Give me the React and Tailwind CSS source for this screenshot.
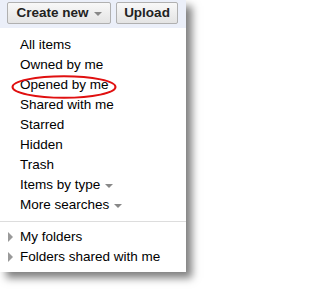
import React from 'react';

const Caret = () => (
    <span className="inline-block ml-[5px] mt-[2px] align-middle w-0 h-0 border-l-[4px] border-r-[4px] border-t-[4px] border-l-transparent border-r-transparent border-t-[#888]" />
);

const Arrow = () => (
    <span className="inline-block ml-[8px] mr-[7px] w-0 h-0 border-t-[5px] border-b-[5px] border-l-[5px] border-t-transparent border-b-transparent border-l-[#9a9a9a]" />
);

const items = ['All items', 'Owned by me', 'Opened by me', 'Shared with me', 'Starred', 'Hidden', 'Trash'];

export default function App() {
    return (
        <div className="w-[202px] h-[289px] bg-white" style={{ fontFamily: '"Liberation Sans", Arial, sans-serif' }}>
            <div className="relative w-[186px] h-[272px] bg-white shadow-[6px_6px_8px_rgba(0,0,0,0.5)]">
                <div className="h-[28px] bg-[#ebeff9] flex gap-[5px] pl-[7px] pt-[2px]">
                    <button className="w-[104px] h-[22px] border border-[#b0b0b0] rounded-[2px] bg-gradient-to-b from-[#f8f8f8] to-[#e4e4e4] text-[13.5px] font-bold text-[#222] flex items-center justify-center">
                        Create new<Caret />
                    </button>
                    <button className="w-[62px] h-[22px] border border-[#b0b0b0] rounded-[2px] bg-gradient-to-b from-[#f8f8f8] to-[#e4e4e4] text-[13.5px] font-bold text-[#222]">
                        Upload
                    </button>
                </div>
                <ul className="mt-[7px] text-[13.5px] text-black">
                    {items.map((t) => (
                        <li key={t} className="h-[20px] leading-[20px] pl-[20px]">{t}</li>
                    ))}
                    <li className="h-[20px] leading-[20px] pl-[20px]">Items by type<Caret /></li>
                    <li className="h-[20px] leading-[20px] pl-[20px]">More searches<Caret /></li>
                </ul>
                <div className="mt-[6px] border-t border-[#ddd] pt-[5px] text-[13.5px] text-black">
                    <div className="h-[20px] leading-[20px] flex items-center"><Arrow />My folders</div>
                    <div className="h-[20px] leading-[20px] flex items-center"><Arrow />Folders shared with me</div>
                </div>
                <svg className="absolute left-[11px] top-[75px]" width="106" height="24" viewBox="0 0 106 24">
                    <ellipse cx="53" cy="12" rx="51.5" ry="10.8" fill="none" stroke="#e01010" strokeWidth="2" />
                </svg>
            </div>
        </div>
    );
}
